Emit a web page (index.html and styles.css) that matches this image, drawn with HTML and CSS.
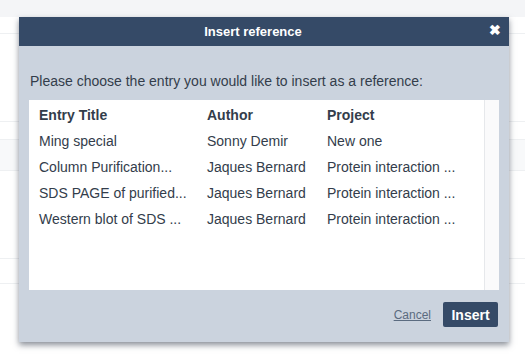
FILE: index.html
```html
<!DOCTYPE html>
<html lang="en">
<head>
<meta charset="UTF-8" />
<meta name="viewport" content="width=device-width, initial-scale=1" />
<title>Insert reference</title>
<link rel="stylesheet" href="styles.css">
</head>
<body>

<div class="pagina">
  <div class="topo"></div>
  <div class="linha alta"></div>
  <div class="linha media"></div>
  <div class="linha baixa"></div>
  <div class="linha cinza"></div>
  <div class="linha media"></div>
  <div class="linha final"></div>
</div>

<div class="modal">
  <div class="modal-cabecalho">
    <span>Insert reference</span>
    <span class="fechar">&#10006;</span>
  </div>
  <div class="modal-corpo">
    <p class="instrucao">Please choose the entry you would like to insert as a reference:</p>
    <div class="lista">
      <table>
        <tr>
          <th>Entry Title</th>
          <th>Author</th>
          <th>Project</th>
        </tr>
        <tr>
          <td>Ming special</td>
          <td>Sonny Demir</td>
          <td>New one</td>
        </tr>
        <tr>
          <td>Column Purification...</td>
          <td>Jaques Bernard</td>
          <td>Protein interaction ...</td>
        </tr>
        <tr>
          <td>SDS PAGE of purified...</td>
          <td>Jaques Bernard</td>
          <td>Protein interaction ...</td>
        </tr>
        <tr>
          <td>Western blot of SDS ...</td>
          <td>Jaques Bernard</td>
          <td>Protein interaction ...</td>
        </tr>
      </table>
      <div class="rolagem"></div>
    </div>
  </div>
  <div class="modal-rodape">
    <a href="#" class="cancelar">Cancel</a>
    <button class="inserir">Insert</button>
  </div>
</div>

</body>
</html>
```

FILE: styles.css
```css
body {
  margin: 0; padding: 0;
  height: 354px;
  background: #fff;
  overflow: hidden;
  font-family: "Liberation Sans", Arial, sans-serif;
  color: #333d4b;
}

/* fundo da pagina */
.pagina {
  display: flex;
  flex-direction: column;
}

.topo {
  height: 17px;
  background: #f4f5f7;
}

.linha {
  border-bottom: 1px solid #eef0f2;
}

.alta { height: 16px; }
.media { height: 87px; }
.baixa { height: 17px; }
.cinza { height: 30px; background: #f8f9fa; }
.final { height: 24px; }

/* janela */
.modal {
  position: absolute;
  left: 19px;
  top: 17px;
  width: 490px;
  height: 325px;
  background: #cbd3de;
  box-shadow: 0 3px 6px rgba(40, 50, 65, 0.55);
  display: flex;
  flex-direction: column;
}

.modal-cabecalho {
  height: 29px;
  padding-right: 22px;
  background: #354a67;
  color: #fff;
  font-weight: bold;
  font-size: 13px;
  display: flex;
  align-items: center;
  justify-content: center;
  position: relative;
}

.fechar {
  position: absolute;
  right: 8px;
  top: 5px;
  font-size: 14px;
}

.modal-corpo {
  padding: 0 10px;
}

.instrucao {
  margin: 27px 0 11px;
  font-size: 14px;
  line-height: 16px;
  padding-left: 1px;
}

.lista {
  height: 190px;
  background: #fff;
  display: flex;
}

table {
  flex: 1;
  border-collapse: collapse;
  align-self: flex-start;
  margin-top: 2px;
  font-size: 14px;
}

th, td {
  height: 26px;
  padding: 0;
  text-align: left;
  vertical-align: middle;
  white-space: nowrap;
}

th {
  font-weight: bold;
}

th:first-child, td:first-child {
  padding-left: 10px;
  width: 168px;
}

th:nth-child(2), td:nth-child(2) {
  width: 120px;
}

.rolagem {
  width: 14px;
  background: #fafafb;
  border-left: 1px solid #e6e8eb;
}

.modal-rodape {
  display: flex;
  justify-content: flex-end;
  align-items: center;
  gap: 12px;
  padding: 12px 11px 0;
}

.cancelar {
  color: #5b6b80;
  font-size: 12px;
}

.inserir {
  height: 25px;
  width: 55px;
  border: none;
  border-radius: 2px;
  background: #354a67;
  color: #fff;
  font-family: "Liberation Sans", Arial, sans-serif;
  font-weight: bold;
  font-size: 14px;
  padding: 0;
}
```
